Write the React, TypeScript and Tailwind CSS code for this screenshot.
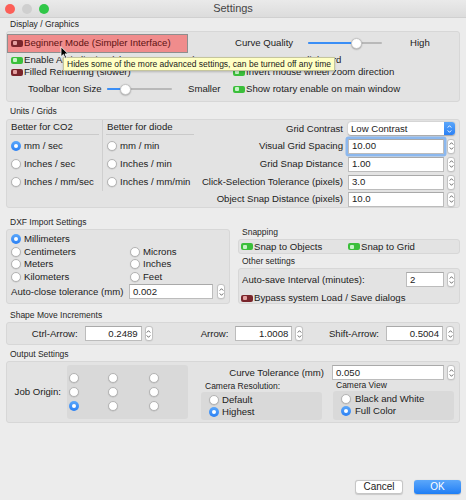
import * as React from "react";

function Toggle({ on }: { on: boolean }) {
  return on ? (
    <span className="relative inline-block h-[7px] w-[12px] shrink-0 rounded-[2px] bg-[#3bbf3b]">
      <span className="absolute left-[1.5px] top-[1.5px] h-[4px] w-[4px] rounded-[1px] bg-[#c8f3c8]" />
    </span>
  ) : (
    <span className="relative inline-block h-[7px] w-[12px] shrink-0 rounded-[2px] bg-[#7a262c]">
      <span className="absolute left-[1.5px] top-[1.5px] h-[4px] w-[4px] rounded-[1px] bg-[#e4a0a0]" />
    </span>
  );
}

function Radio({ on }: { on?: boolean }) {
  return on ? (
    <span className="flex h-[10px] w-[10px] shrink-0 items-center justify-center rounded-full bg-linear-to-b from-[#5ba7fa] to-[#2a80f4]">
      <span className="h-[4px] w-[4px] rounded-full bg-white" />
    </span>
  ) : (
    <span className="h-[10px] w-[10px] shrink-0 rounded-full border-[0.5px] border-[#b4b4b4] bg-white shadow-[0_0.5px_1px_rgba(0,0,0,0.15)]" />
  );
}

function Stepper() {
  return (
    <span className="ml-[3px] flex h-[15px] w-[8px] shrink-0 flex-col items-center justify-center gap-[2px] rounded-[3px] border-[0.5px] border-[#c2c2c2] bg-white shadow-[0_0.5px_1px_rgba(0,0,0,0.1)]">
      <svg width="5" height="3" viewBox="0 0 5 3">
        <path d="M0.7 2.6L2.5 0.7 4.3 2.6" fill="none" stroke="#4a4a4a" strokeWidth="0.8" />
      </svg>
      <svg width="5" height="3" viewBox="0 0 5 3">
        <path d="M0.7 0.4L2.5 2.3 4.3 0.4" fill="none" stroke="#4a4a4a" strokeWidth="0.8" />
      </svg>
    </span>
  );
}

function Field({
  value,
  className,
}: {
  value: string;
  className?: string;
}) {
  return (
    <span
      className={
        "flex h-[15px] shrink-0 items-center border-[0.5px] border-[#bcbcbc] border-t-[#a9a9a9] bg-white px-[3px] " +
        (className ?? "")
      }
    >
      {value}
    </span>
  );
}

function Slider({ className, pos }: { className: string; pos: number }) {
  return (
    <span className={"relative h-[12px] shrink-0 " + className}>
      <span className="absolute left-0 right-0 top-[5px] h-[2px] rounded-full bg-[#b9b9b9]" />
      <span
        className="absolute left-0 top-[5px] h-[2px] rounded-full bg-[#3a8ef6]"
        style={{ width: pos }}
      />
      <span
        className="absolute top-[0.5px] h-[11px] w-[11px] rounded-full border-[0.5px] border-[#c4c4c4] bg-white shadow-[0_0.5px_1.5px_rgba(0,0,0,0.3)]"
        style={{ left: pos - 5.5 }}
      />
    </span>
  );
}

function SectionLabel({
  children,
  className,
}: {
  children: React.ReactNode;
  className?: string;
}) {
  return (
    <div
      className={
        "h-[13px] whitespace-nowrap pl-[4px] text-[8.5px] leading-[13px] text-[#262626] " +
        (className ?? "")
      }
    >
      {children}
    </div>
  );
}

const box = "rounded-[3px] border border-[#d7d7d7] bg-[#e3e3e3]";

export default function App() {
  return (
    <div className="relative flex h-[500px] w-[466px] flex-col overflow-hidden bg-[#ececec] font-['Liberation_Sans',Arial,sans-serif] text-[9.6px] leading-none text-[#1c1c1c]">
      {/* Title bar */}
      <div className="flex h-[18px] shrink-0 items-center border-b border-[#d0d0d0] bg-linear-to-b from-[#eaeaea] to-[#dcdcdc]">
        <div className="flex w-[60px] gap-[7px] pl-[5px]">
          <span className="h-[10px] w-[10px] rounded-full bg-[#fc5f58]" />
          <span className="h-[10px] w-[10px] rounded-full bg-[#cfcfcf]" />
          <span className="h-[10px] w-[10px] rounded-full bg-[#30c748]" />
        </div>
        <div className="flex-1 text-center text-[11px] text-[#454545]">Settings</div>
        <div className="w-[60px]" />
      </div>

      <div className="flex flex-col px-[6px]">
        {/* Display / Graphics */}
        <SectionLabel>Display / Graphics</SectionLabel>
        <div
          className={
            box +
            " grid h-[71px] grid-cols-[226px_1fr] grid-rows-[22px_12px_12px_22px] whitespace-nowrap"
          }
        >
          <div className="flex items-center">
            <div className="flex h-[19px] w-[181px] items-center gap-[1px] border border-[#8e8e8e] bg-[#f08c8c] pl-[3px] text-[#5e1212]">
              <Toggle on={false} />
              <span>Beginner Mode (Simpler Interface)</span>
            </div>
          </div>
          <div className="flex items-center pl-[2px]">
            <span className="w-[73px]">Curve Quality</span>
            <Slider className="w-[74px]" pos={48} />
            <span className="ml-[28px]">High</span>
          </div>

          <div className="flex items-center gap-[1px] pl-[4px]">
            <Toggle on />
            <span>Enable Anti-aliasing (changes next start)</span>
          </div>
          <div className="flex items-center gap-[1px]">
            <Toggle on />
            <span>Use System Clipboard</span>
          </div>

          <div className="flex items-center gap-[1px] pl-[4px]">
            <Toggle on={false} />
            <span>Filled Rendering (slower)</span>
          </div>
          <div className="flex items-center gap-[1px]">
            <Toggle on />
            <span>Invert mouse wheel zoom direction</span>
          </div>

          <div className="flex items-center pl-[21px]">
            <span className="w-[79px]">Toolbar Icon Size</span>
            <Slider className="w-[65px]" pos={18} />
            <span className="ml-[16px]">Smaller</span>
          </div>
          <div className="flex items-center gap-[1px]">
            <Toggle on />
            <span>Show rotary enable on main window</span>
          </div>
        </div>

        {/* Units / Grids */}
        <SectionLabel className="mt-[3px]">Units / Grids</SectionLabel>
        <div className={box + " mt-[1px] flex h-[89px] whitespace-nowrap"}>
          <div className="flex h-[71px] w-[190px]">
            <div className="flex w-[95px] flex-col">
              <div className="mx-[3px] flex h-[16px] items-center border-b border-[#cacaca] pl-[1px]">
                Better for CO2
              </div>
              <div className="mt-[2px] flex flex-col pl-[4px]">
                <div className="flex h-[18px] items-center gap-[3px]">
                  <Radio on />
                  <span>mm / sec</span>
                </div>
                <div className="flex h-[18px] items-center gap-[3px]">
                  <Radio />
                  <span>Inches / sec</span>
                </div>
                <div className="flex h-[18px] items-center gap-[3px]">
                  <Radio />
                  <span>Inches / mm/sec</span>
                </div>
              </div>
            </div>
            <div className="flex w-[95px] flex-col border-l border-[#cfcfcf]">
              <div className="mx-[3px] flex h-[16px] items-center border-b border-[#cacaca] pl-[1px]">
                Better for diode
              </div>
              <div className="mt-[2px] flex flex-col pl-[4px]">
                <div className="flex h-[18px] items-center gap-[3px]">
                  <Radio />
                  <span>mm / min</span>
                </div>
                <div className="flex h-[18px] items-center gap-[3px]">
                  <Radio />
                  <span>Inches / min</span>
                </div>
                <div className="flex h-[18px] items-center gap-[3px]">
                  <Radio />
                  <span>Inches / mm/min</span>
                </div>
              </div>
            </div>
          </div>

          <div className="flex flex-1 flex-col pr-[4px]">
            <div className="flex h-[17px] items-center">
              <span className="flex-1 pr-[5px] text-right">Grid Contrast</span>
              <span className="flex h-[13px] w-[107px] items-center rounded-[3px] bg-white pl-[3px] shadow-[0_0.5px_1.5px_rgba(0,0,0,0.3)]">
                <span className="flex-1">Low Contrast</span>
                <span className="flex h-[13px] w-[11px] flex-col items-center justify-center gap-[2px] rounded-r-[3px] bg-linear-to-b from-[#5aa6fa] to-[#2a80f4]">
                  <svg width="5" height="3" viewBox="0 0 5 3">
                    <path d="M0.7 2.6L2.5 0.7 4.3 2.6" fill="none" stroke="#fff" strokeWidth="0.9" />
                  </svg>
                  <svg width="5" height="3" viewBox="0 0 5 3">
                    <path d="M0.7 0.4L2.5 2.3 4.3 0.4" fill="none" stroke="#fff" strokeWidth="0.9" />
                  </svg>
                </span>
              </span>
            </div>
            <div className="flex h-[18px] items-center">
              <span className="flex-1 pr-[5px] text-right">Visual Grid Spacing</span>
              <Field
                value="10.00"
                className="w-[96px] rounded-[1px] shadow-[0_0_0_2.5px_#8cb8ee]"
              />
              <Stepper />
            </div>
            <div className="flex h-[18px] items-center">
              <span className="flex-1 pr-[5px] text-right">Grid Snap Distance</span>
              <Field value="1.00" className="w-[96px]" />
              <Stepper />
            </div>
            <div className="flex h-[18px] items-center">
              <span className="flex-1 pr-[5px] text-right">
                Click-Selection Tolerance (pixels)
              </span>
              <Field value="3.0" className="w-[96px]" />
              <Stepper />
            </div>
            <div className="flex h-[16px] items-center">
              <span className="flex-1 pr-[5px] text-right">
                Object Snap Distance (pixels)
              </span>
              <Field value="10.0" className="w-[96px]" />
              <Stepper />
            </div>
          </div>
        </div>

        {/* DXF / Snapping / Other */}
        <div className="mt-[8px] flex gap-[8px] whitespace-nowrap">
          <div className="flex w-[224px] flex-col">
            <SectionLabel>DXF Import Settings</SectionLabel>
            <div className={box + " h-[75px] pl-[4px] pt-[3px]"}>
              <div className="grid grid-cols-[119px_1fr] grid-rows-[12.5px_12.5px_12.5px_12.5px]">
                <div className="flex items-center gap-[3px]">
                  <Radio on />
                  <span>Millimeters</span>
                </div>
                <div />
                <div className="flex items-center gap-[3px]">
                  <Radio />
                  <span>Centimeters</span>
                </div>
                <div className="flex items-center gap-[3px]">
                  <Radio />
                  <span>Microns</span>
                </div>
                <div className="flex items-center gap-[3px]">
                  <Radio />
                  <span>Meters</span>
                </div>
                <div className="flex items-center gap-[3px]">
                  <Radio />
                  <span>Inches</span>
                </div>
                <div className="flex items-center gap-[3px]">
                  <Radio />
                  <span>Kilometers</span>
                </div>
                <div className="flex items-center gap-[3px]">
                  <Radio />
                  <span>Feet</span>
                </div>
              </div>
              <div className="flex h-[17px] items-center">
                <span className="w-[118px]">Auto-close tolerance (mm)</span>
                <Field value="0.002" className="w-[84px]" />
                <span className="ml-[1px]">
                  <Stepper />
                </span>
              </div>
            </div>
          </div>

          <div className="flex flex-1 flex-col">
            <SectionLabel className="mt-[10px]">Snapping</SectionLabel>
            <div className={box + " flex h-[15px] items-center pl-[2px]"}>
              <div className="flex w-[107px] items-center gap-[1px]">
                <Toggle on />
                <span>Snap to Objects</span>
              </div>
              <div className="flex items-center gap-[1px]">
                <Toggle on />
                <span>Snap to Grid</span>
              </div>
            </div>
            <SectionLabel className="mt-[1px]">Other settings</SectionLabel>
            <div className={box + " flex h-[36px] flex-col pr-[4px]"}>
              <div className="flex h-[21px] items-center pl-[3px]">
                <span className="flex-1">Auto-save Interval (minutes):</span>
                <Field value="2" className="w-[38px]" />
                <Stepper />
              </div>
              <div className="flex h-[13px] items-center gap-[1px] pl-[2px] pt-[3px]">
                <Toggle on={false} />
                <span>Bypass system Load / Save dialogs</span>
              </div>
            </div>
          </div>
        </div>

        {/* Shape Move Increments */}
        <SectionLabel className="mt-[5px]">Shape Move Increments</SectionLabel>
        <div className={box + " flex h-[23px] items-center whitespace-nowrap"}>
          {[
            ["Ctrl-Arrow:", "0.2489"],
            ["Arrow:", "1.0008"],
            ["Shift-Arrow:", "0.5004"],
          ].map(([label, value]) => (
            <div key={label} className="flex flex-1 items-center pr-[5px]">
              <span className="flex-1 pr-[7px] text-right">{label}</span>
              <Field value={value} className="w-[57px] justify-end" />
              <Stepper />
            </div>
          ))}
        </div>

        {/* Output Settings */}
        <SectionLabel className="mt-[3px]">Output Settings</SectionLabel>
        <div className={box + " flex h-[62px] whitespace-nowrap"}>
          <div className="flex w-[60px] shrink-0 items-center justify-end pr-[6px]">
            Job Origin:
          </div>
          <div className="mt-[3px] h-[54px] w-[121px] shrink-0 rounded-[3px] bg-[#d9d9d9] pl-[2px] pt-[8px]">
            <div className="grid grid-cols-[39px_41px_1fr] gap-y-[4px]">
              {[0, 1, 2, 3, 4, 5, 6, 7, 8].map((i) => (
                <Radio key={i} on={i === 6} />
              ))}
            </div>
          </div>
          <div className="ml-[13px] flex flex-1 flex-col pr-[4px]">
            <div className="mt-[3px] flex h-[15px] items-center">
              <span className="flex-1 pr-[8px] text-right">Curve Tolerance (mm)</span>
              <Field value="0.050" className="w-[112px]" />
              <Stepper />
            </div>
            <div className="flex gap-[11px]">
              <div className="flex w-[121px] flex-col">
                <div className="h-[12px] pl-[4px] text-[8.5px] leading-[12px]">
                  Camera Resolution:
                </div>
                <div className="h-[28px] rounded-[3px] bg-[#d9d9d9] pl-[8px] pt-[2px]">
                  <div className="flex h-[12px] items-center gap-[3px]">
                    <Radio />
                    <span>Default</span>
                  </div>
                  <div className="flex h-[12px] items-center gap-[3px]">
                    <Radio on />
                    <span>Highest</span>
                  </div>
                </div>
              </div>
              <div className="flex w-[121px] flex-col">
                <div className="h-[11px] pl-[3px] text-[8.5px] leading-[11px]">
                  Camera View
                </div>
                <div className="h-[29px] rounded-[3px] bg-[#d9d9d9] pl-[8px] pt-[2px]">
                  <div className="flex h-[12px] items-center gap-[4px]">
                    <Radio />
                    <span>Black and White</span>
                  </div>
                  <div className="flex h-[12px] items-center gap-[4px]">
                    <Radio on />
                    <span>Full Color</span>
                  </div>
                </div>
              </div>
            </div>
          </div>
        </div>
      </div>

      <div className="flex-1" />

      {/* Buttons */}
      <div className="flex justify-end gap-[11px] pb-[6px] pr-[5px]">
        <button className="flex h-[14px] w-[48px] items-center justify-center rounded-[3px] border-[0.5px] border-[#c6c6c6] bg-white text-[10px] text-[#1c1c1c] shadow-[0_0.5px_1px_rgba(0,0,0,0.15)]">
          Cancel
        </button>
        <button className="flex h-[14px] w-[47px] items-center justify-center rounded-[3px] bg-linear-to-b from-[#5ba7fa] to-[#1d7ef5] text-[10px] text-white shadow-[0_0.5px_1px_rgba(0,0,0,0.2)]">
          OK
        </button>
      </div>

      {/* Tooltip over the display group */}
      <div className="absolute left-[63px] top-[57px] flex h-[14px] items-center whitespace-nowrap border-[0.5px] border-[#c5c59c] bg-[#ffffc4] px-[3px] text-[8.5px] text-[#1a1a1a] shadow-[0_1px_2px_rgba(0,0,0,0.2)]">
        Hides some of the more advanced settings, can be turned off any time
      </div>

      {/* Mouse pointer */}
      <svg
        className="absolute left-[60px] top-[46px]"
        width="9"
        height="13"
        viewBox="0 0 9 13"
      >
        <path
          d="M1 0.8V10.6L3.4 8.4 5.1 12.2 6.6 11.5 5 7.9H8.2Z"
          fill="#000"
          stroke="#fff"
          strokeWidth="0.8"
          strokeLinejoin="round"
        />
      </svg>
    </div>
  );
}
